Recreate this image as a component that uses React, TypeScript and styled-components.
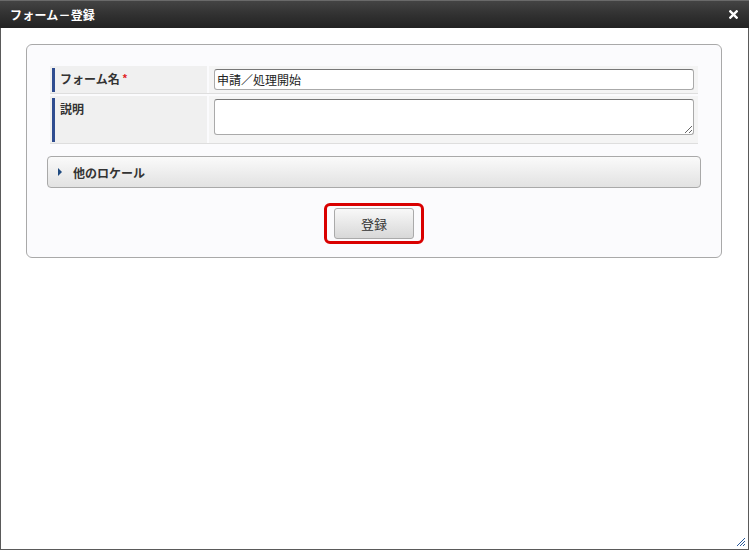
import React from "react";
import styled, { createGlobalStyle } from "styled-components";

const GlobalStyle = createGlobalStyle`
  html, body {
    margin: 0;
    padding: 0;
    background: #fff;
  }
  body {
    font-family: "Liberation Sans", Arial, "Noto Sans CJK JP", sans-serif;
    font-size: 12px;
    color: #333;
  }
`;

const Window = styled.div`
  width: 749px;
  height: 550px;
  box-sizing: border-box;
  border: 1px solid #5a5a5a;
  border-top: none;
  display: flex;
  flex-direction: column;
  position: relative;
  background: #fff;
`;

const TitleBar = styled.div`
  height: 28px;
  margin: 0 -1px;
  box-sizing: border-box;
  border-top: 1px solid #6a6a6a;
  background: linear-gradient(#444 0%, #333 45%, #222 100%);
  display: flex;
  align-items: center;
  justify-content: space-between;
  padding: 0 11px 0 10px;
`;

const Title = styled.div`
  color: #fff;
  font-weight: bold;
  font-size: 12px;
  letter-spacing: 0.2px;
`;

const CloseIcon = styled.svg`
  width: 9px;
  height: 9px;
`;

const Body = styled.div`
  flex: 1;
  padding: 16px 26px 0 25px;
`;

const Panel = styled.div`
  border: 1px solid #a9a9a9;
  border-radius: 6px;
  background: #fbfbfd;
  padding: 21px 20px 16px 20px;
  height: 214px;
  box-sizing: border-box;
`;

const FormTable = styled.div`
  display: flex;
  flex-direction: column;
  gap: 2px;
  margin: 0 3px 0 3px;
`;

const Row = styled.div<{ $height: number }>`
  display: grid;
  grid-template-columns: 157px 1fr;
  column-gap: 2px;
  height: ${(p) => p.$height}px;
  border-bottom: 1px solid #dedede;
`;

const LabelCell = styled.div`
  background: #f0f0f0;
  padding: 2px 0 0 2px;
  display: flex;
`;

const LabelInner = styled.div`
  flex: 1;
  border-left: 3px solid #2e4c8f;
  padding: 2px 0 0 5px;
  margin-bottom: 1px;
  font-weight: bold;
  font-size: 12px;
  color: #333;
`;

const Required = styled.span`
  color: #e02020;
  margin-left: 3px;
  font-size: 11px;
  position: relative;
  top: -2px;
`;

const ValueCell = styled.div`
  background: #f4f4f4;
  padding: 3px 4px 0 5px;
`;

const TextInput = styled.input`
  width: 100%;
  height: 21px;
  box-sizing: border-box;
  border: 1px solid #aaa;
  border-top-color: #777;
  border-radius: 3px;
  padding: 0 2px;
  font-family: inherit;
  font-size: 12px;
  color: #222;
  background: #fff;
  outline: none;
`;

const TextArea = styled.textarea`
  width: 100%;
  height: 36px;
  box-sizing: border-box;
  border: 1px solid #aaa;
  border-top-color: #777;
  border-radius: 3px;
  font-family: inherit;
  font-size: 12px;
  background: #fff;
  display: block;
  resize: both;
  outline: none;
`;

const Collapse = styled.div`
  margin-top: 12px;
  height: 32px;
  box-sizing: border-box;
  border: 1px solid #a9a9a9;
  border-radius: 4px;
  background: linear-gradient(#fafafa, #e2e2e2);
  display: flex;
  align-items: center;
  padding-left: 10px;
  gap: 11px;
  font-weight: bold;
  font-size: 12px;
  color: #333;
`;

const Arrow = styled.span`
  width: 0;
  height: 0;
  border-top: 4px solid transparent;
  border-bottom: 4px solid transparent;
  border-left: 4px solid #1f4a80;
`;

const ButtonArea = styled.div`
  display: flex;
  justify-content: center;
  margin-top: 15px;
`;

const Highlight = styled.div`
  border: 3px solid #d90000;
  border-radius: 6px;
  padding: 2px 7px;
`;

const SubmitButton = styled.button`
  width: 80px;
  height: 31px;
  border: 1px solid #aaa;
  border-radius: 3px;
  background: linear-gradient(#f8f8f8, #d8d8d8);
  font-family: inherit;
  font-size: 13px;
  color: #333;
  display: block;
`;

const Grip = styled.svg`
  position: absolute;
  right: 2px;
  bottom: 2px;
  width: 11px;
  height: 11px;
`;

export default function App() {
  return (
    <>
      <GlobalStyle />
      <Window>
        <TitleBar>
          <Title>フォーム－登録</Title>
          <CloseIcon viewBox="0 0 10 10">
            <path d="M1.5 1.5 L8.5 8.5 M8.5 1.5 L1.5 8.5" stroke="#fff" strokeWidth="2.6" strokeLinecap="square" />
          </CloseIcon>
        </TitleBar>
        <Body>
          <Panel>
            <FormTable>
              <Row $height={27}>
                <LabelCell>
                  <LabelInner>
                    フォーム名<Required>*</Required>
                  </LabelInner>
                </LabelCell>
                <ValueCell>
                  <TextInput defaultValue="申請／処理開始" />
                </ValueCell>
              </Row>
              <Row $height={47}>
                <LabelCell>
                  <LabelInner>説明</LabelInner>
                </LabelCell>
                <ValueCell>
                  <TextArea />
                </ValueCell>
              </Row>
            </FormTable>
            <Collapse>
              <Arrow />
              他のロケール
            </Collapse>
            <ButtonArea>
              <Highlight>
                <SubmitButton>登録</SubmitButton>
              </Highlight>
            </ButtonArea>
          </Panel>
        </Body>
        <Grip viewBox="0 0 11 11">
          <path d="M10 2 L2 10 M10 5 L5 10 M10 8 L8 10" stroke="#2a5a9a" strokeWidth="1" />
        </Grip>
      </Window>
    </>
  );
}
